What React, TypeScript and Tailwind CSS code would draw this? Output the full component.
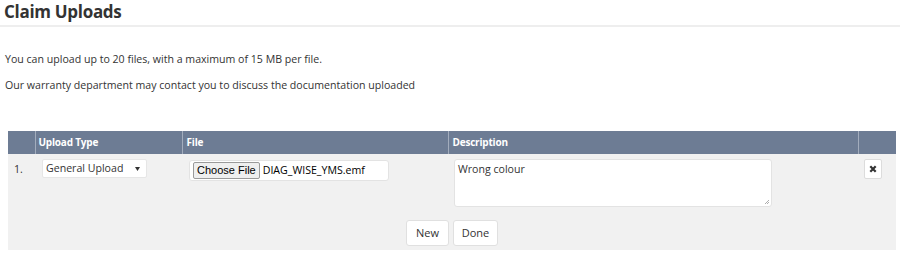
import React from 'react';

const font = "font-['Open_Sans','Noto_Sans',sans-serif]";

export default function App() {
  return (
    <main className={`w-[900px] h-[254px] bg-white text-[#333] ${font} overflow-hidden`}>
      {/* Title */}
      <div className="border-b-2 border-[#eeeeee] px-[4px] pt-[1px] h-[27px]">
        <h1 className="text-[17px] leading-[22px] font-bold text-[#333] tracking-[-0.3px]">Claim Uploads</h1>
      </div>

      <div className="px-[5px] pt-[25px] text-[10.6px] leading-[15px] text-[#333]">
        <p>You can upload up to 20 files, with a maximum of 15 MB per file.</p>
        <p className="mt-[11px]">Our warranty department may contact you to discuss the documentation uploaded</p>
      </div>

      {/* Upload table */}
      <div className="mx-[8px] mt-[38px] w-[888px]">
        <table className="w-full border-collapse table-fixed text-[10.6px]">
          <colgroup>
            <col className="w-[27px]" />
            <col className="w-[147px]" />
            <col className="w-[266px]" />
            <col className="w-[410px]" />
            <col className="w-[38px]" />
          </colgroup>
          <thead>
            <tr className="bg-[#6d7c94] text-white h-[23px] text-[10px] tracking-[-0.2px]">
              <th className="border-r border-[#a3adbd]"></th>
              <th className="text-left font-bold px-[3px] border-r border-[#a3adbd]">Upload Type</th>
              <th className="text-left font-bold px-[4px] border-r border-[#a3adbd]">File</th>
              <th className="text-left font-bold px-[4px] border-r border-[#a3adbd]">Description</th>
              <th></th>
            </tr>
          </thead>
          <tbody className="bg-[#f1f1f1]">
            <tr className="align-top">
              <td className="pl-[6px] pt-[8px]">1.</td>
              <td className="pl-[7px] pt-[5px]">
                <div className="w-[105px] h-[19px] bg-white border border-[#e6e6e6] rounded-[2px] flex items-center justify-between pl-[3px] pr-[6px]">
                  <span>General Upload</span>
                  <svg width="5" height="4" viewBox="0 0 5 4">
                    <path d="M0 0H5L2.5 4Z" fill="#333" />
                  </svg>
                </div>
              </td>
              <td className="pl-[7px] pt-[6px]">
                <div className="w-[200px] h-[21px] bg-white border border-[#e3e3e3] rounded-[3px] flex items-center pl-[3px]">
                  <span className="h-[17px] px-[3px] bg-[#efefef] border border-[#9a9a9a] rounded-[2px] flex items-center font-['Liberation_Sans',sans-serif] text-[11px] text-black">
                    Choose File
                  </span>
                  <span className="ml-[3px] text-[10.6px] text-black">DIAG_WISE_YMS.emf</span>
                </div>
              </td>
              <td className="pl-[6px] pt-[5px] pb-[4px]">
                <div className="relative w-[318px] h-[48px] bg-white border border-[#e3e3e3] rounded-[3px] px-[3px] py-[2px]">
                  Wrong colour
                  <svg className="absolute right-[1px] bottom-[1px]" width="6" height="6" viewBox="0 0 6 6">
                    <path d="M5 1L1 5M5 3L3 5" stroke="#999" strokeWidth="0.8" />
                  </svg>
                </div>
              </td>
              <td className="pl-[6px] pt-[5px]">
                <div className="w-[18px] h-[20px] bg-white border border-[#dcdcdc] rounded-[2px] flex items-center justify-center">
                  <svg width="8" height="8" viewBox="0 0 8 8">
                    <path d="M1.3 1.3L6.7 6.7M6.7 1.3L1.3 6.7" stroke="#333" strokeWidth="2.2" />
                  </svg>
                </div>
              </td>
            </tr>
            <tr>
              <td colSpan={5} className="pt-[9px] pb-[4px]">
                <div className="flex justify-center gap-[4px]">
                  <button className="w-[43px] h-[26px] bg-white border border-[#e0e0e0] rounded-[3px] text-[11px] text-[#333]">New</button>
                  <button className="w-[45px] h-[26px] bg-white border border-[#e0e0e0] rounded-[3px] text-[11px] text-[#333]">Done</button>
                </div>
              </td>
            </tr>
          </tbody>
        </table>
      </div>
    </main>
  );
}
